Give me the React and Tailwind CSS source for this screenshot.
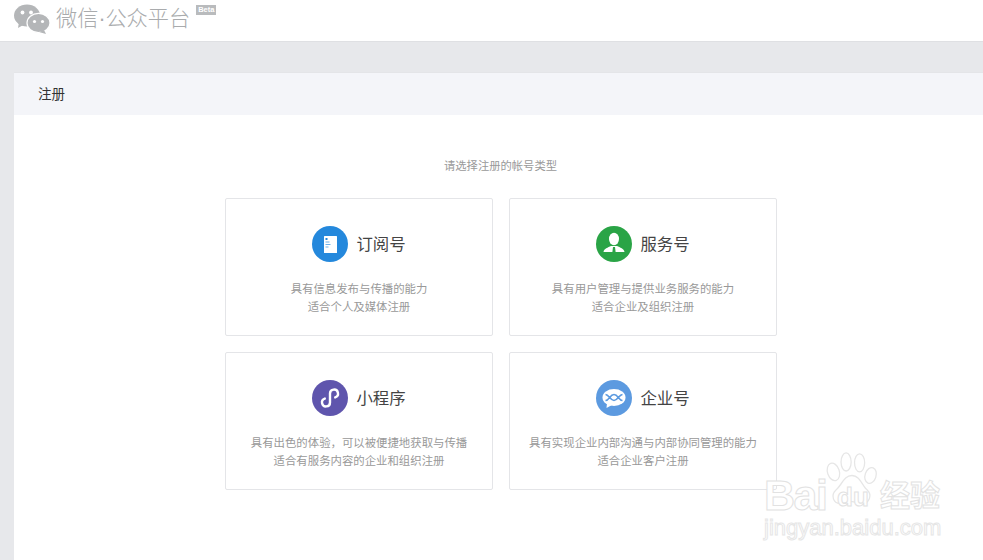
const WechatLogo = () => (
  <svg width="36" height="30" viewBox="0 0 36 30" className="shrink-0">
    <ellipse cx="13" cy="11.5" rx="13" ry="11" fill="#b4b6b8" />
    <path d="M5 18 L4 24 L11 20 Z" fill="#b4b6b8" />
    <circle cx="8.5" cy="8.5" r="1.9" fill="#fff" />
    <circle cx="17" cy="8.5" r="1.9" fill="#fff" />
    <ellipse cx="24.5" cy="19" rx="11.5" ry="9.6" fill="#b4b6b8" stroke="#fff" strokeWidth="1.2" />
    <path d="M30 26 L32 30 L25 28 Z" fill="#b4b6b8" />
    <circle cx="20.5" cy="17.5" r="1.6" fill="#fff" />
    <circle cx="28.5" cy="17.5" r="1.6" fill="#fff" />
  </svg>
);

const DocIcon = () => (
  <svg width="36" height="36" viewBox="0 0 36 36">
    <circle cx="18" cy="18" r="18" fill="#2488dc" />
    <rect x="12" y="10" width="13" height="17" rx="0.5" fill="#fff" />
    <rect x="13.5" y="12" width="2" height="2" fill="#2488dc" />
    <rect x="13.5" y="15.5" width="4" height="1" fill="#6fb2ea" />
    <rect x="13.5" y="18" width="5" height="1" fill="#6fb2ea" />
    <rect x="13.5" y="20.5" width="3" height="1" fill="#6fb2ea" />
  </svg>
);

const PersonIcon = () => (
  <svg width="36" height="36" viewBox="0 0 36 36">
    <circle cx="18" cy="18" r="18" fill="#2aa446" />
    <ellipse cx="18" cy="13" rx="5" ry="6.2" fill="#fff" />
    <path d="M7.5 26 C8 22.5 12 21.5 15 20 L21 20 C24 21.5 28 22.5 28.5 26 Z" fill="#fff" />
    <path d="M17 21 H19 L19.6 26 H16.4 Z" fill="#2aa446" />
  </svg>
);

const LinkIcon = () => (
  <svg width="36" height="36" viewBox="0 0 36 36">
    <circle cx="18" cy="18" r="18" fill="#5f55ad" />
    <path
      d="M12.8 18.6 A4 4 0 1 0 18 22.4 V13.6 A4 4 0 1 1 23.2 17.4"
      fill="none"
      stroke="#fff"
      strokeWidth="2.4"
      strokeLinecap="round"
    />
  </svg>
);

const ChatIcon = () => (
  <svg width="36" height="36" viewBox="0 0 36 36">
    <circle cx="18" cy="18" r="18" fill="#5c9ae0" />
    <ellipse cx="18" cy="17.5" rx="11.5" ry="8.5" fill="#fff" />
    <path d="M11 23 L10.5 28 L16 25 Z" fill="#fff" />
    <path
      d="M9.5 14.5 C13 14.5 14 20.5 18 20.5 C22 20.5 23 14.5 26.5 14.5 M9.5 20.5 C13 20.5 14 14.5 18 14.5 C22 14.5 23 20.5 26.5 20.5"
      fill="none"
      stroke="#5c9ae0"
      strokeWidth="1.6"
    />
  </svg>
);

const types = [
  { name: "订阅号", icon: <DocIcon />, lines: ["具有信息发布与传播的能力", "适合个人及媒体注册"] },
  { name: "服务号", icon: <PersonIcon />, lines: ["具有用户管理与提供业务服务的能力", "适合企业及组织注册"] },
  { name: "小程序", icon: <LinkIcon />, lines: ["具有出色的体验，可以被便捷地获取与传播", "适合有服务内容的企业和组织注册"] },
  { name: "企业号", icon: <ChatIcon />, lines: ["具有实现企业内部沟通与内部协同管理的能力", "适合企业客户注册"] },
];

const Watermark = () => (
  <div className="absolute left-[764px] top-[452px] w-[200px] h-[90px] select-none pointer-events-none">
    <svg width="54" height="56" viewBox="0 0 64 62" className="absolute left-[61px] top-0" preserveAspectRatio="none" fill="#fff" stroke="#e6e6e6" strokeWidth="1.5">
      <ellipse cx="10" cy="22" rx="7" ry="10" transform="rotate(-20 10 22)" />
      <ellipse cx="25" cy="11" rx="6" ry="10" />
      <ellipse cx="41" cy="12" rx="6" ry="10" />
      <ellipse cx="54" cy="26" rx="6.5" ry="9" transform="rotate(20 54 26)" />
      <path d="M32 26 C42 26 44 38 50 42 C56 47 53 57 44 57 C38 57 36 55 32 55 C27 55 24 57 18 57 C9 57 7 47 13 42 C20 37 22 26 32 26 Z" />
    </svg>
    <div className="absolute left-0 top-[18px] font-['Liberation_Sans',sans-serif] font-bold text-[43px] leading-[50px] tracking-[-1.5px] text-white [-webkit-text-stroke:1px_#e2e2e2]">Bai</div>
    <div className="absolute left-[73px] top-[33px] font-['Liberation_Sans',sans-serif] font-bold text-[26px] leading-[24px] text-white [-webkit-text-stroke:1px_#e2e2e2]">du</div>
    <div className="absolute left-[116px] top-[23px] font-['Noto_Sans_CJK_SC',sans-serif] font-bold text-[30px] leading-[36px] whitespace-nowrap text-white [-webkit-text-stroke:1px_#e2e2e2]">经验</div>
    <div className="absolute left-0 top-[63px] font-['Liberation_Sans',sans-serif] text-[22px] leading-[26px] whitespace-nowrap text-white [-webkit-text-stroke:1px_#e6e6e6]">jingyan.baidu.com</div>
  </div>
);

export default function App() {
  return (
    <div className="relative w-[983px] h-[560px] overflow-hidden bg-[#e7e8eb] font-['Liberation_Sans','Noto_Sans_CJK_SC',sans-serif]">
      <header className="h-[42px] bg-white border-b border-[#dfe0e3] flex items-start pl-[14px] pt-[4px]">
        <WechatLogo />
        <div className="ml-[6px] mt-[1px] text-[21.2px] leading-[28px] text-[#a9abad] font-light whitespace-nowrap">微信·公众平台</div>
        <div className="ml-[6px] mt-[1px] bg-[#b9bbbd] text-white text-[7.5px] leading-[10px] px-[2px] font-bold">Beta</div>
      </header>
      <main className="ml-[14px] mt-[30px] bg-white h-[488px] border-t border-[#e4e5e8]">
        <div className="h-[42px] bg-[#f4f5f9] pl-[24px] pt-[1px] text-[13.5px] leading-[42px] text-[#333]">注册</div>
        <p className="mt-[42px] w-[973px] text-center text-[11.3px] leading-[18px] text-[#999]">请选择注册的帐号类型</p>
        <div className="mt-[23px] ml-[211px] grid grid-cols-[268px_268px] gap-[16px]">
          {types.map((t) => (
            <div key={t.name} className="h-[138px] bg-white border border-[#e4e5e8] rounded-[2px] flex flex-col items-center pt-[27px]">
              <div className="flex items-center gap-[8px] h-[36px]">
                {t.icon}
                <span className="text-[16.4px] text-[#444] leading-[36px]">{t.name}</span>
              </div>
              <div className="mt-[18px] text-[11.4px] leading-[18px] text-[#999] text-center">
                {t.lines.map((l) => (
                  <div key={l}>{l}</div>
                ))}
              </div>
            </div>
          ))}
        </div>
      </main>
      <Watermark />
    </div>
  );
}
